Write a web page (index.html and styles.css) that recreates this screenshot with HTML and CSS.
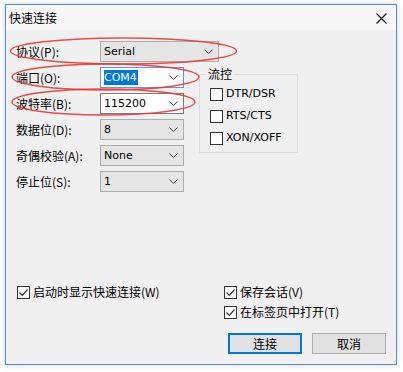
FILE: index.html
```html
<!DOCTYPE html>
<html lang="zh-CN">
<head>
<meta charset="utf-8">
<link rel="stylesheet" href="styles.css">
</head>
<body>
<div class="window">
  <div class="titlebar">
    <span class="title">快速连接</span>
    <svg class="close" width="11" height="11" viewBox="0 0 11 11"><path d="M0.5 0.5 L10.5 10.5 M10.5 0.5 L0.5 10.5" stroke="#111" stroke-width="1.1" fill="none"/></svg>
  </div>
  <div class="content">
    <div class="row">
      <label class="lbl">协议(P):</label>
      <div class="combo list wide"><span class="val">Serial</span><svg class="arrow" width="9" height="5" viewBox="0 0 9 5"><path d="M0.5 0.5 L4.5 4.5 L8.5 0.5" stroke="#444" fill="none"/></svg></div>
    </div>
    <div class="lower">
      <div class="rows">
        <div class="row">
          <label class="lbl">端口(O):</label>
          <div class="combo edit focus"><span class="val"><span class="sel">COM4</span></span><svg class="arrow" width="9" height="5" viewBox="0 0 9 5"><path d="M0.5 0.5 L4.5 4.5 L8.5 0.5" stroke="#444" fill="none"/></svg></div>
        </div>
        <div class="row">
          <label class="lbl">波特率(B):</label>
          <div class="combo edit"><span class="val">115200</span><svg class="arrow" width="9" height="5" viewBox="0 0 9 5"><path d="M0.5 0.5 L4.5 4.5 L8.5 0.5" stroke="#444" fill="none"/></svg></div>
        </div>
        <div class="row">
          <label class="lbl">数据位(D):</label>
          <div class="combo list"><span class="val">8</span><svg class="arrow" width="9" height="5" viewBox="0 0 9 5"><path d="M0.5 0.5 L4.5 4.5 L8.5 0.5" stroke="#444" fill="none"/></svg></div>
        </div>
        <div class="row">
          <label class="lbl">奇偶校验(A):</label>
          <div class="combo list"><span class="val">None</span><svg class="arrow" width="9" height="5" viewBox="0 0 9 5"><path d="M0.5 0.5 L4.5 4.5 L8.5 0.5" stroke="#444" fill="none"/></svg></div>
        </div>
        <div class="row">
          <label class="lbl">停止位(S):</label>
          <div class="combo list"><span class="val">1</span><svg class="arrow" width="9" height="5" viewBox="0 0 9 5"><path d="M0.5 0.5 L4.5 4.5 L8.5 0.5" stroke="#444" fill="none"/></svg></div>
        </div>
      </div>
      <div class="group">
        <span class="legend">流控</span>
        <div class="check"><span class="box"></span><span class="ctext">DTR/DSR</span></div>
        <div class="check"><span class="box"></span><span class="ctext">RTS/CTS</span></div>
        <div class="check"><span class="box"></span><span class="ctext">XON/XOFF</span></div>
      </div>
    </div>
    <div class="bottom">
      <div class="opts">
        <div class="check"><span class="box checked"><svg width="11" height="11" viewBox="0 0 11 11"><path d="M1.5 5.5 L4.3 8.3 L9.5 2.5" stroke="#333" stroke-width="1.2" fill="none"/></svg></span><span class="ctext">启动时显示快速连接(W)</span></div>
        <div class="optcol">
          <div class="check"><span class="box checked"><svg width="11" height="11" viewBox="0 0 11 11"><path d="M1.5 5.5 L4.3 8.3 L9.5 2.5" stroke="#333" stroke-width="1.2" fill="none"/></svg></span><span class="ctext">保存会话(V)</span></div>
          <div class="check"><span class="box checked"><svg width="11" height="11" viewBox="0 0 11 11"><path d="M1.5 5.5 L4.3 8.3 L9.5 2.5" stroke="#333" stroke-width="1.2" fill="none"/></svg></span><span class="ctext">在标签页中打开(T)</span></div>
        </div>
      </div>
      <div class="buttons">
        <button class="btn default">连接</button>
        <button class="btn">取消</button>
      </div>
    </div>
  </div>
</div>
<svg class="marks" width="403" height="372" viewBox="0 0 403 372">
  <ellipse cx="123.5" cy="51" rx="113" ry="13" fill="none" stroke="#e8393b" stroke-width="1.4" opacity="0.9"/>
  <ellipse cx="105.5" cy="77" rx="93.5" ry="13" fill="none" stroke="#e8393b" stroke-width="1.4" opacity="0.9"/>
  <ellipse cx="103.5" cy="102" rx="91.5" ry="13" fill="none" stroke="#e8393b" stroke-width="1.4" opacity="0.9"/>
</svg>
</body>
</html>
```
FILE: styles.css
```css
* { box-sizing: border-box; }
html, body { margin: 0; padding: 0; }
body {
  width: 403px;
  height: 372px;
  background: #ffffff;
  position: relative;
  overflow: hidden;
  font-family: "Noto Sans CJK SC", "Noto Sans", sans-serif;
  font-size: 12px;
  color: #000;
}
.window {
  margin: 4px 0 0 5px;
  width: 392px;
  height: 361px;
  border: 1px solid #5b87d6;
  background: #f0f0f0;
  box-shadow: 0 0 6px rgba(0,0,0,0.18);
  display: flex;
  flex-direction: column;
}
.titlebar {
  height: 25px;
  flex: none;
  background: #f7f7f7;
  display: flex;
  align-items: center;
  justify-content: space-between;
  padding: 0 9px 0 3px;
}
.title { font-size: 12px; line-height: 16px; color: #000; }
.close { display: block; margin-top: 1px; }
.content {
  flex: 1;
  padding: 11px 0 10px 10px;
  display: flex;
  flex-direction: column;
}
.row {
  display: flex;
  align-items: center;
  height: 21px;
  margin-bottom: 5px;
}
.lbl { width: 84px; flex: none; line-height: 16px; white-space: nowrap; }
.combo {
  position: relative;
  width: 84px;
  flex: none;
  height: 21px;
  display: flex;
  align-items: center;
  padding-left: 3px;
  font-family: "DejaVu Sans", sans-serif;
  font-size: 11px;
}
.combo.wide { width: 119px; }
.combo.list {
  background: #e5e5e5;
  border: 1px solid #adadad;
}
.combo.edit {
  background: #ffffff;
  border: 1px solid #7a7a7a;
}
.combo.focus { border-color: #5a9be0; }
.val { flex: 1; line-height: 15px; }
.sel { background: #0078d7; color: #fff; padding: 1px 1px 1px 0; }
.arrow { margin-right: 5px; display: block; }
.lower { display: flex; align-items: flex-start; }
.rows { display: flex; flex-direction: column; width: 168px; flex: none; }
.group {
  position: relative;
  margin: 7px 0 0 15px;
  padding: 11px 0 0 10px;
  width: 99px;
  height: 79px;
  border: 1px solid #dcdcdc;
}
.legend {
  position: absolute;
  left: 6px;
  top: -9px;
  padding: 0 2px;
  background: #f0f0f0;
  line-height: 16px;
  font-size: 12px;
}
.check {
  display: flex;
  align-items: center;
  height: 16px;
  margin-bottom: 6px;
}
.box {
  width: 13px;
  height: 13px;
  border: 1px solid #333;
  background: #fff;
  margin-right: 3px;
  flex: none;
  display: flex;
  align-items: center;
  justify-content: center;
}
.box svg { display: block; }
.ctext { line-height: 16px; white-space: nowrap; }
.group .ctext { font-family: "DejaVu Sans", sans-serif; font-size: 11px; }
.bottom { margin-top: auto; display: flex; flex-direction: column; }
.opts { display: flex; padding-left: 1px; }
.opts > .check { width: 207px; align-self: flex-start; }
.optcol { display: flex; flex-direction: column; }
.optcol .check { margin-bottom: 4px; }
.optcol .check:last-child { margin-bottom: 0; }
.buttons {
  display: flex;
  justify-content: flex-end;
  gap: 10px;
  padding-right: 10px;
  margin-top: 13px;
}
.btn {
  width: 74px;
  height: 21px;
  background: #e1e1e1;
  border: 1px solid #adadad;
  font-family: "Noto Sans CJK SC", sans-serif;
  font-size: 12px;
  padding: 0;
  color: #000;
}
.btn.default { border: 2px solid #0078d7; }
.marks { position: absolute; left: 0; top: 0; pointer-events: none; }
```
